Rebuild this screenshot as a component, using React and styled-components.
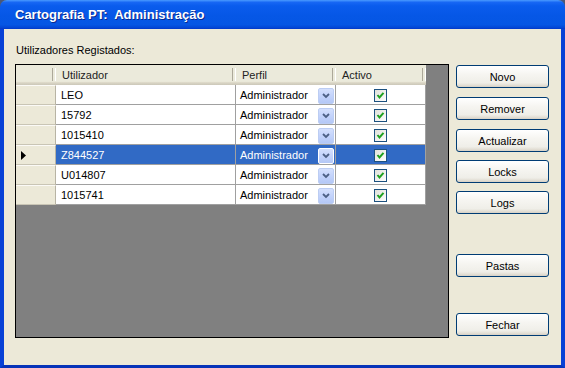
import React from "react";
import styled, { createGlobalStyle, css } from "styled-components";

const Global = createGlobalStyle`
  html, body { margin: 0; padding: 0; background: #4a5878; }
  body { font-family: "Liberation Sans", Arial, sans-serif; font-size: 11px; }
  * { box-sizing: border-box; }
`;

const Window = styled.div`
  width: 565px;
  height: 368px;
  display: flex;
  flex-direction: column;
  border-radius: 7px 7px 0 0;
  overflow: hidden;
`;

const TitleBar = styled.div`
  height: 29px;
  flex: none;
  display: flex;
  align-items: center;
  padding: 0 0 0 15px;
  background: linear-gradient(
    180deg,
    #4a9bff 0%,
    #1767f4 8%,
    #0a5ced 20%,
    #0657e6 55%,
    #0556e4 85%,
    #0347d6 95%,
    #0237c8 100%
  );
`;

const Title = styled.span`
  font-family: "Liberation Sans", Arial, sans-serif;
  font-weight: bold;
  font-size: 13px;
  color: #ffffff;
  white-space: pre;
  text-shadow: 1px 1px 0 #0a2a90;
`;

const Frame = styled.div`
  flex: 1;
  display: flex;
  flex-direction: column;
  background: #ece9d8;
  border-left: 4px solid #0841d6;
  border-right: 4px solid #0841d6;
  border-bottom: 3px solid #0633b8;
  padding: 15px 12px 0 11px;
`;

const Label = styled.div`
  color: #000;
  line-height: 13px;
  margin-left: 1px;
  margin-bottom: 7px;
`;

const MainRow = styled.div`
  display: flex;
  align-items: flex-start;
`;

const GridView = styled.div`
  width: 434px;
  height: 274px;
  background: #808080;
  border: 1px solid #000;
  flex: none;
`;

const Table = styled.div`
  display: grid;
  grid-template-columns: 40px 180px 100px 90px;
  grid-template-rows: 20px;
  grid-auto-rows: 20px;
  width: 410px;
`;

const HeaderCell = styled.div`
  position: relative;
  display: flex;
  align-items: center;
  padding: 0 0 1px 6px;
  background: linear-gradient(180deg, #ebeadb 0%, #ebeadb 82%, #e2decd 85%, #d6d2c2 92%, #cbc7b8 100%);
  color: #222;
  &::after {
    content: "";
    position: absolute;
    right: 0;
    top: 3px;
    bottom: 4px;
    width: 2px;
    border-left: 1px solid #aca899;
    border-right: 1px solid #ffffff;
  }
`;

const RowHeader = styled.div`
  display: flex;
  align-items: center;
  padding: 1px 0 0 5px;
  background: #ece9d8;
  border-top: 1px solid #fbfaf6;
  border-bottom: 1px solid #c9c5b5;
  border-right: 1px solid #b8b4a4;
`;

const Cell = styled.div`
  position: relative;
  display: flex;
  align-items: center;
  padding: 1px 0 0 ${(p) => (p.$pad ? p.$pad : 4)}px;
  border-right: 1px solid #a0a0a0;
  border-bottom: 1px solid #a0a0a0;
  white-space: nowrap;
  overflow: hidden;
  ${(p) =>
    p.$center &&
    css`
      justify-content: center;
      padding: 2px 0 0 0;
    `}
  ${(p) =>
    p.$selected
      ? css`
          background: #316ac5;
          color: #ffffff;
        `
      : css`
          background: #ffffff;
          color: #000000;
        `}
`;

const ComboButton = styled.div`
  position: absolute;
  right: 1px;
  top: 3px;
  width: 16px;
  height: 16px;
  display: flex;
  align-items: center;
  justify-content: center;
  border-radius: 2px;
  background: linear-gradient(180deg, #d4e0fd 0%, #c3d3fb 50%, #b4c8f6 100%);
  border: 1px solid ${(p) => (p.$selected ? "#ffffff" : "#bccdf3")};
`;

const Check = styled.div`
  width: 13px;
  height: 13px;
  border: 1px solid #1c5180;
  background: linear-gradient(135deg, #e0e0da 0%, #ffffff 100%);
  display: flex;
  align-items: center;
  justify-content: center;
`;

const ButtonColumn = styled.div`
  display: flex;
  flex-direction: column;
  margin: 1px 0 0 7px;
`;

const Button = styled.button`
  width: 93px;
  height: 23px;
  margin-top: ${(p) => p.$gap || 0}px;
  border: 1px solid #003c74;
  border-radius: 3px;
  background: linear-gradient(180deg, #ffffff 0%, #f6f5f1 40%, #efeee8 80%, #e2ded4 92%, #d6d0c5 100%);
  font-family: "Liberation Sans", Arial, sans-serif;
  font-size: 11px;
  font-weight: 400;
  color: #000;
  padding: 0;
  cursor: default;
`;

const Chevron = () => (
  <svg width="8" height="6" viewBox="0 0 8 6">
    <polyline points="1,1 4,4 7,1" fill="none" stroke="#4d6185" strokeWidth="1.8" />
  </svg>
);

const CheckMark = () => (
  <svg width="9" height="9" viewBox="0 0 9 9">
    <polyline points="1.5,4 3.5,6.5 7.5,1.8" fill="none" stroke="#21a121" strokeWidth="2" />
  </svg>
);

const Pointer = () => (
  <svg width="5" height="9" viewBox="0 0 5 9">
    <polygon points="0,0 5,4.5 0,9" fill="#000" />
  </svg>
);

const users = ["LEO", "15792", "1015410", "Z844527", "U014807", "1015741"];
const selectedIndex = 3;

const buttons = [
  { label: "Novo", gap: 0 },
  { label: "Remover", gap: 9 },
  { label: "Actualizar", gap: 9 },
  { label: "Locks", gap: 8 },
  { label: "Logs", gap: 8 },
  { label: "Pastas", gap: 40 },
  { label: "Fechar", gap: 36 },
];

export default function App() {
  return (
    <>
      <Global />
      <Window>
        <TitleBar>
          <Title>{"Cartografia PT:  Administração"}</Title>
        </TitleBar>
        <Frame>
          <Label>Utilizadores Registados:</Label>
          <MainRow>
            <GridView>
              <Table>
                <HeaderCell />
                <HeaderCell>Utilizador</HeaderCell>
                <HeaderCell>Perfil</HeaderCell>
                <HeaderCell>Activo</HeaderCell>
                {users.map((u, i) => {
                  const sel = i === selectedIndex;
                  return (
                    <React.Fragment key={u}>
                      <RowHeader>{sel && <Pointer />}</RowHeader>
                      <Cell $selected={sel} $pad={5}>
                        {u}
                      </Cell>
                      <Cell $selected={sel}>
                        Administrador
                        <ComboButton $selected={sel}>
                          <Chevron />
                        </ComboButton>
                      </Cell>
                      <Cell $selected={sel} $center>
                        <Check>
                          <CheckMark />
                        </Check>
                      </Cell>
                    </React.Fragment>
                  );
                })}
              </Table>
            </GridView>
            <ButtonColumn>
              {buttons.map((b) => (
                <Button key={b.label} $gap={b.gap}>
                  {b.label}
                </Button>
              ))}
            </ButtonColumn>
          </MainRow>
        </Frame>
      </Window>
    </>
  );
}
